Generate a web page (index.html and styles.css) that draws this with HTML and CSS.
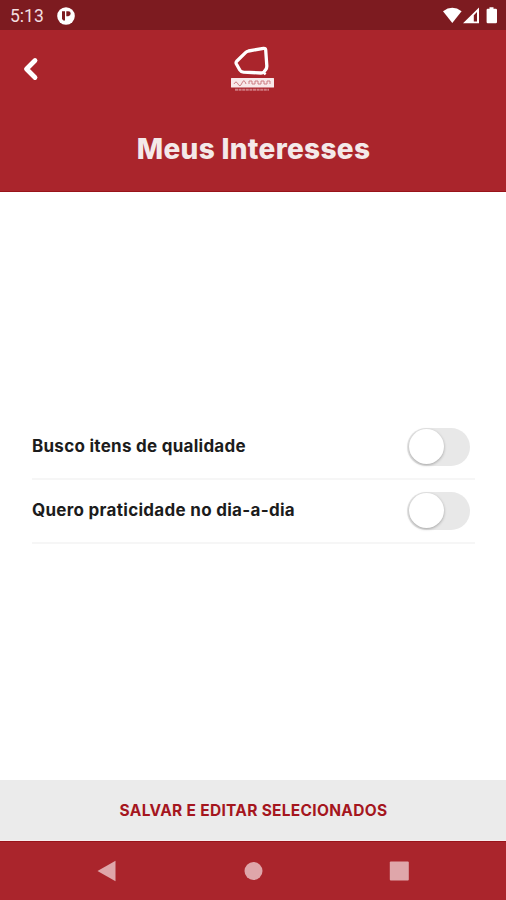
FILE: index.html
```html
<!DOCTYPE html>
<html lang="pt-BR">
<head>
<meta charset="utf-8">
<title>Meus Interesses</title>
<link rel="stylesheet" href="styles.css">
</head>
<body>
<div class="screen">
  <div class="status">
    <span class="clock">5:13</span>
    <svg class="notice" width="18" height="18" viewBox="0 0 18 18"><circle cx="9" cy="9" r="8.8" fill="#fff"/><path d="M5 4.200h3v9.200H6.400L5 12zM9.300 4.200h2q2.400 0 2.400 2.400t-2.400 2.600h-2z" fill="#7d1b20"/></svg>
    <svg class="signals" width="56" height="18" viewBox="0 0 56 18"><path d="M0 4.200Q9.300-2.600 18.600 4.200L9.300 16z" fill="#fff"/><path fill="#fff" fill-rule="evenodd" d="M20 16.200 36 .5v15.700zM30.800 8.200V14.600H34V5z"/><path d="M46.500.2h4v1.600h2.300q1.200 0 1.200 1.200v12q0 1.200-1.200 1.200h-8q-1.200 0-1.200-1.200V3q0-1.200 1.200-1.200h1.700z" fill="#fff"/></svg>
  </div>
  <header class="header">
    <div class="topbar">
      <svg class="back" width="18" height="26" viewBox="0 0 18 26"><path d="M13 4.500 4.500 13l8.500 8.500" fill="none" stroke="#fff" stroke-width="4.800" stroke-linecap="round" stroke-linejoin="round"/></svg>
      <svg class="logo" width="46" height="47" viewBox="0 0 46 47"><path d="M18.500 5 33.500 2.400Q35.500 2.100 35.700 4L36.800 19.500Q37 22 35.600 23.800L34 25.800Q32.800 27 31 27L13.500 26.200Q11 26 9.800 24L6.400 18Q5.600 16.500 6.700 15.200L15.500 6.600Q16.700 5.400 18.500 5z" fill="none" stroke="#fff" stroke-width="3.300" stroke-linejoin="round"/><path d="m33 25.500 2.500 3" stroke="#fff" stroke-width="2.500"/><rect x="1" y="32" width="43" height="9.500" rx=".5" fill="#f8e9ea"/><path d="M4 38q2-4 4 0t4-1 4 1M19 38v-3h3v3h3v-3h3v3h3v-3h3v3h3v-3h3v3" fill="none" stroke="#c8757a" stroke-width=".9"/><path d="M5 43.700h34" stroke="#d07b81" stroke-width="2" stroke-dasharray="3 .6"/></svg>
    </div>
    <h1 class="title">Meus Interesses</h1>
  </header>
  <main class="content">
    <div class="row"><span class="label first">Busco itens de qualidade</span><span class="switch"><i class="knob"></i></span></div>
    <div class="row"><span class="label second">Quero praticidade no dia-a-dia</span><span class="switch"><i class="knob"></i></span></div>
  </main>
  <button class="save"><span>SALVAR E EDITAR SELECIONADOS</span></button>
  <nav class="nav">
    <svg width="20" height="22" viewBox="0 0 20 22"><path d="M.5 11 18.500.8v20.400z" fill="#dfa6aa"/></svg>
    <svg width="20" height="22" viewBox="0 0 20 22"><circle cx="10.500" cy="11" r="9" fill="#dfa6aa"/></svg>
    <svg width="20" height="22" viewBox="0 0 20 22"><rect x=".8" y="1.500" width="19" height="19" rx="1" fill="#dfa6aa"/></svg>
  </nav>
</div>
</body>
</html>
```
FILE: styles.css
```css
* { box-sizing: border-box; }
body { margin: 0; }
.screen {
  width: 506px;
  height: 900px;
  display: flex;
  flex-direction: column;
  background: #fff;
  font-family: Inter, "Liberation Sans", sans-serif;
}
.status {
  height: 30px;
  display: flex;
  align-items: center;
  padding: 1px 7px 0 10px;
  background: #7d1b20;
}
.clock {
  width: 47px;
  font: 400 17.500px/22px Roboto, sans-serif;
  color: #f3dfe0;
}
.signals { margin-left: auto; }
.header {
  height: 162px;
  background: #aa252c;
  border-bottom: 1px solid #99131a;
}
.topbar {
  height: 78px;
  display: grid;
  grid-template-columns: 1fr 46px 1fr;
  align-items: center;
}
.back { margin-left: 22px; }
.title {
  margin: 24px 0 0;
  padding-left: 1px;
  text-align: center;
  font-size: 28px;
  line-height: 34px;
  font-weight: 800;
  letter-spacing: .3px;
  color: #f4e9e9;
}
.content {
  flex: 1;
  padding: 224px 31px 0 32px;
}
.row {
  height: 64px;
  display: flex;
  align-items: center;
  justify-content: space-between;
  padding-right: 5px;
  border-bottom: 2px solid #f6f6f6;
}
.label {
  margin-top: -2px;
  font-size: 17px;
  font-weight: 700;
  color: #1c1c1c;
  white-space: nowrap;
}
.first { letter-spacing: .27px; }
.second { letter-spacing: .29px; }
.switch {
  width: 63px;
  height: 38px;
  padding: 1px;
  border-radius: 19px;
  background: #e8e8e8;
}
.knob {
  display: block;
  width: 35px;
  height: 35px;
  margin-left: 1px;
  border-radius: 50%;
  background: #fff;
  box-shadow: 0 1px 3px rgba(0, 0, 0, .3);
}
.save {
  height: 61px;
  border: 0;
  padding: 1px 0 0 1px;
  border-bottom: 1px solid #f7eeee;
  background: #ebebeb;
  color: #a5161e;
  font-family: inherit;
  font-size: 15.500px;
  font-weight: 700;
  letter-spacing: .3px;
}
.nav {
  height: 59px;
  display: flex;
  justify-content: space-between;
  align-items: center;
  padding: 0 97px 0 97px;
  background: #aa252c;
  border-top: 1px solid #99131a;
}
```
